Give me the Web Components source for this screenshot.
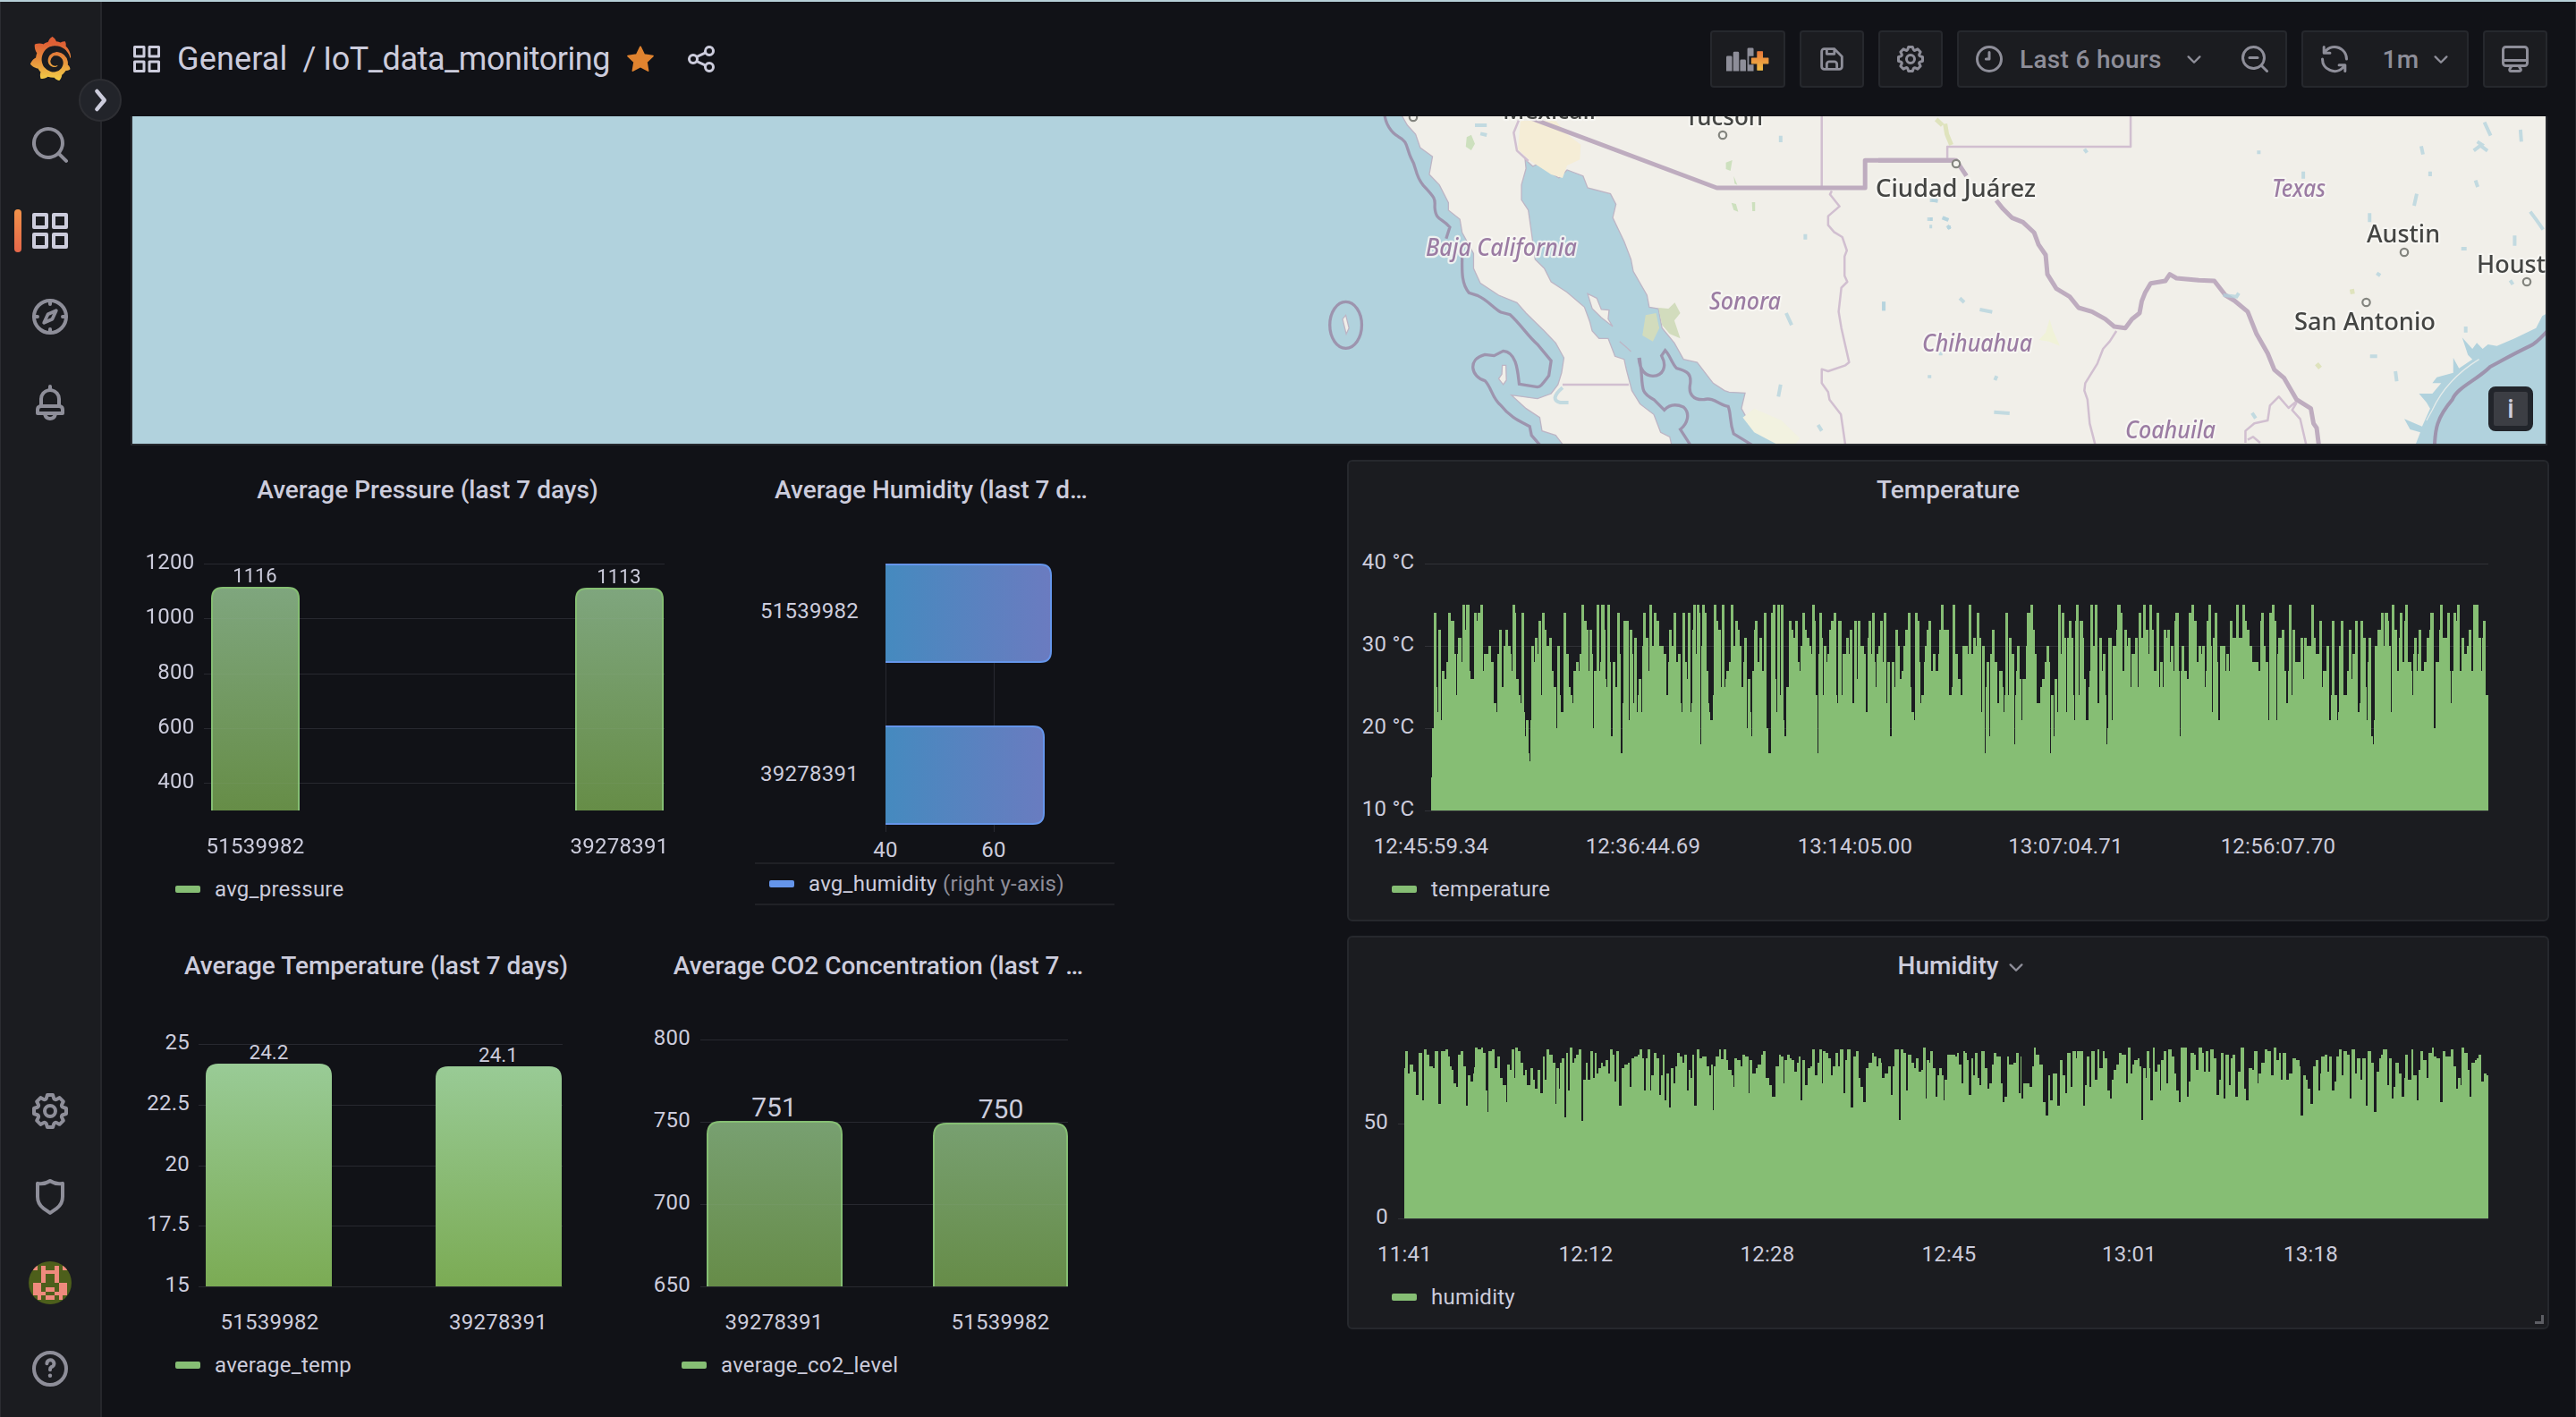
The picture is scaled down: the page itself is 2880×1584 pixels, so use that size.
<!DOCTYPE html>
<html lang="en">
<head>
<meta charset="utf-8">
<title>IoT_data_monitoring</title>
<style>
html,body{margin:0;padding:0;background:#111217}
body{width:2880px;height:1584px;overflow:hidden;font-family:Roboto,"Liberation Sans",sans-serif;color:#ccccdc}
</style>
</head>
<body>
<dash-app></dash-app>
<script>
const ICONS={
apps:'<path d="M10,13H3a1,1,0,0,0-1,1v7a1,1,0,0,0,1,1h7a1,1,0,0,0,1-1V14A1,1,0,0,0,10,13ZM9,20H4V15H9ZM21,2H14a1,1,0,0,0-1,1v7a1,1,0,0,0,1,1h7a1,1,0,0,0,1-1V3A1,1,0,0,0,21,2ZM20,9H15V4h5Zm1,4H14a1,1,0,0,0-1,1v7a1,1,0,0,0,1,1h7a1,1,0,0,0,1-1V14A1,1,0,0,0,21,13Zm-1,7H15V15h5ZM10,2H3A1,1,0,0,0,2,3v7a1,1,0,0,0,1,1h7a1,1,0,0,0,1-1V3A1,1,0,0,0,10,2ZM9,9H4V4H9Z"/>',
search:'<path d="M21.71,20.29,18,16.61A9,9,0,1,0,16.61,18l3.68,3.68a1,1,0,0,0,1.42,0A1,1,0,0,0,21.71,20.29ZM11,18a7,7,0,1,1,7-7A7,7,0,0,1,11,18Z"/>',
searchminus:'<path d="M21.71,20.29,18,16.61A9,9,0,1,0,16.61,18l3.68,3.68a1,1,0,0,0,1.42,0A1,1,0,0,0,21.71,20.29ZM11,18a7,7,0,1,1,7-7A7,7,0,0,1,11,18Z"/><rect x="7" y="10" width="8" height="2" rx="1"/>',
compass:'<g fill="none" stroke="currentColor" stroke-width="2" stroke-linecap="round" stroke-linejoin="round"><circle cx="12" cy="12" r="9"/><path d="M12 3v2M12 19v2M3 12h2M19 12h2"/><path d="M15.4 8.6l-4.6 2-2.2 4.8 4.6-2z" stroke-width="1.9"/></g>',
bell:'<path d="M18,13.18V10a6,6,0,0,0-5-5.91V3a1,1,0,0,0-2,0V4.09A6,6,0,0,0,6,10v3.18A3,3,0,0,0,4,16v2a1,1,0,0,0,1,1H8.14a4,4,0,0,0,7.72,0H19a1,1,0,0,0,1-1V16A3,3,0,0,0,18,13.18ZM8,10a4,4,0,0,1,8,0v3H8Zm4,10a2,2,0,0,1-1.72-1h3.44A2,2,0,0,1,12,20Zm6-3H6V16a1,1,0,0,1,1-1H17a1,1,0,0,1,1,1Z"/>',
cog:'<path d="M21.32,9.55l-1.89-.63.89-1.78A1,1,0,0,0,20.13,6L18,3.87a1,1,0,0,0-1.15-.19l-1.78.89-.63-1.89A1,1,0,0,0,13.5,2h-3a1,1,0,0,0-.95.68L8.92,4.57,7.14,3.68A1,1,0,0,0,6,3.87L3.87,6a1,1,0,0,0-.19,1.15l.89,1.78-1.89.63A1,1,0,0,0,2,10.5v3a1,1,0,0,0,.68.95l1.89.63-.89,1.78A1,1,0,0,0,3.87,18L6,20.13a1,1,0,0,0,1.15.19l1.78-.89.63,1.89a1,1,0,0,0,.95.68h3a1,1,0,0,0,.95-.68l.63-1.89,1.78.89A1,1,0,0,0,18,20.13L20.13,18a1,1,0,0,0,.19-1.15l-.89-1.78,1.89-.63A1,1,0,0,0,22,13.5v-3A1,1,0,0,0,21.32,9.55ZM20,12.78l-1.2.4A2,2,0,0,0,17.64,16l.57,1.14-1.1,1.1L16,17.64a2,2,0,0,0-2.79,1.16l-.4,1.2H11.22l-.4-1.2A2,2,0,0,0,8,17.64l-1.14.57-1.1-1.1L6.36,16A2,2,0,0,0,5.2,13.18L4,12.78V11.22l1.2-.4A2,2,0,0,0,6.36,8L5.79,6.89l1.1-1.1L8,6.36A2,2,0,0,0,10.82,5.2l.4-1.2h1.56l.4,1.2A2,2,0,0,0,16,6.36l1.14-.57,1.1,1.1L17.64,8a2,2,0,0,0,1.16,2.79l1.2.4ZM12,8a4,4,0,1,0,4,4A4,4,0,0,0,12,8Zm0,6a2,2,0,1,1,2-2A2,2,0,0,1,12,14Z"/>',
shield:'<path d="M19.63,3.65a1,1,0,0,0-.84-.2,8,8,0,0,1-6.22-1.27,1,1,0,0,0-1.14,0A8,8,0,0,1,5.21,3.45a1,1,0,0,0-.84.2A1,1,0,0,0,4,4.43v7.45a9,9,0,0,0,3.77,7.33l3.65,2.6a1,1,0,0,0,1.16,0l3.65-2.6A9,9,0,0,0,20,11.88V4.43A1,1,0,0,0,19.63,3.65ZM18,11.88a7,7,0,0,1-2.93,5.7L12,19.77,8.93,17.58A7,7,0,0,1,6,11.88V5.58a10,10,0,0,0,6-1.39,10,10,0,0,0,6,1.39Z"/>',
help:'<circle cx="12" cy="12" r="9" fill="none" stroke="currentColor" stroke-width="2"/><path d="M10.2 9.1A2 2 0 1 1 12.6 11.1Q12 11.4 12 12.6" fill="none" stroke="currentColor" stroke-width="2" stroke-linecap="round"/><circle cx="12" cy="15.9" r="1.1"/>',
clock:'<g fill="none" stroke="currentColor" stroke-width="2" stroke-linecap="round" stroke-linejoin="round"><circle cx="12" cy="12" r="9"/><path d="M12 7v5H9.6"/></g>',
save:'<path d="M20.71,9.29l-6-6a1,1,0,0,0-.32-.21A1.09,1.09,0,0,0,14,3H6A3,3,0,0,0,3,6V18a3,3,0,0,0,3,3H18a3,3,0,0,0,3-3V10A1,1,0,0,0,20.71,9.29ZM9,5h4V7H9Zm6,14H9V16a1,1,0,0,1,1-1h4a1,1,0,0,1,1,1Zm4-1a1,1,0,0,1-1,1H17V16a3,3,0,0,0-3-3H10a3,3,0,0,0-3,3v3H6a1,1,0,0,1-1-1V6A1,1,0,0,1,6,5H7V8A1,1,0,0,0,8,9h6a1,1,0,0,0,1-1V6.41l4,4Z"/>',
sync:'<path d="M19.91,15.51H15.38a1,1,0,0,0,0,2h2.4A8,8,0,0,1,4,12a1,1,0,0,0-2,0,10,10,0,0,0,16.88,7.23V21a1,1,0,0,0,2,0V16.5A1,1,0,0,0,19.91,15.51ZM12,2A10,10,0,0,0,5.12,4.77V3a1,1,0,0,0-2,0V7.5a1,1,0,0,0,1,1h4.5a1,1,0,0,0,0-2H6.22A8,8,0,0,1,20,12a1,1,0,0,0,2,0A10,10,0,0,0,12,2Z"/>',
monitor:'<path d="M19,2H5A3,3,0,0,0,2,5V15a3,3,0,0,0,3,3H7.64l-.58,1a2,2,0,0,0,0,2,2,2,0,0,0,1.75,1h6.46A2,2,0,0,0,17,21a2,2,0,0,0,0-2l-.59-1H19a3,3,0,0,0,3-3V5A3,3,0,0,0,19,2ZM8.77,20,10,18H14l1.2,2ZM20,15a1,1,0,0,1-1,1H5a1,1,0,0,1-1-1V14H20Zm0-3H4V5A1,1,0,0,1,5,4H19a1,1,0,0,1,1,1Z"/>',
share:'<path d="M18,14a4,4,0,0,0-3.08,1.48l-5.1-2.35a3.64,3.64,0,0,0,0-2.26l5.1-2.35A4,4,0,1,0,14,6a4.17,4.17,0,0,0,.07.71L8.79,9.14a4,4,0,1,0,0,5.72l5.28,2.43A4.17,4.17,0,0,0,14,18a4,4,0,1,0,4-4ZM18,4a2,2,0,1,1-2,2A2,2,0,0,1,18,4ZM6,14a2,2,0,1,1,2-2A2,2,0,0,1,6,14Zm12,6a2,2,0,1,1,2-2A2,2,0,0,1,18,20Z"/>',
star:'<path fill="#e0832f" stroke="#e0832f" stroke-width="1.2" stroke-linejoin="round" d="M12 2.9l2.8 5.9 6.5.9-4.7 4.5 1.1 6.5-5.7-3.1-5.7 3.1 1.1-6.5L2.7 9.7l6.5-.9z"/>',
right:'<path d="M10 6.5l4.6 5.5L10 17.5" fill="none" stroke="currentColor" stroke-width="2.4" stroke-linecap="round" stroke-linejoin="round"/>',
down:'<path d="M3.5 8.6L12 17l8.5-8.4" fill="none" stroke="currentColor" stroke-width="3.2" stroke-linecap="round" stroke-linejoin="round"/>',
addpanel:'<defs><linearGradient id="p" x1="0" y1="0" x2="0" y2="1"><stop offset="0" stop-color="#e8793a"/><stop offset="1" stop-color="#f0bb45"/></linearGradient></defs><path d="M0 10.200a1 1 0 0 1 1-1h2.500a1 1 0 0 1 1 1V21H0zM5.300 7a1 1 0 0 1 1-1h2.500a1 1 0 0 1 1 1V21H5.300zM10.600 13a1 1 0 0 1 1-1h2.500a1 1 0 0 1 1 1V21h-4.500zM16.200 4a1 1 0 0 1 1-1h2.800a1 1 0 0 1 1 1V21h-4.800z"/><path d="M22.400 4.400h6.600v5h5v6.600h-5v5h-6.600v-5h-5v-6.600h5z" fill="#1b1c20"/><path d="M24 6h3.800v5h4.400v4h-4.400v5h-3.800v-5h-4.400v-4h4.400z" fill="url(#p)" stroke="url(#p)" stroke-width=".8" stroke-linejoin="round"/>',
logo:'<defs><linearGradient id="g" x1="0" y1="0" x2="0" y2="1"><stop offset=".15" stop-color="#df5f35"/><stop offset=".5" stop-color="#e58a3b"/><stop offset="1" stop-color="#f3cf48"/></linearGradient></defs><path fill="url(#g)" d="M23.02 10.59a8.578 8.578 0 0 0-.862-3.034 8.911 8.911 0 0 0-1.789-2.445c.337-1.342-.413-2.505-.413-2.505-1.292-.08-2.113.4-2.416.62-.052-.02-.102-.044-.154-.064-.22-.089-.446-.172-.677-.247-.231-.073-.47-.14-.711-.197a9.867 9.867 0 0 0-.875-.161C14.557.753 12.94 0 12.94 0c-1.804 1.145-2.147 2.744-2.147 2.744l-.018.093c-.098.029-.2.057-.298.088-.138.042-.275.094-.413.143-.138.055-.275.107-.41.166a8.869 8.869 0 0 0-1.557.87l-.063-.029c-2.497-.955-4.716.195-4.716.195-.203 2.658.996 4.33 1.235 4.636a11.608 11.608 0 0 0-.607 2.635C1.636 12.677.953 15.014.953 15.014c1.926 2.214 4.171 2.351 4.171 2.351.003-.002.006-.002.006-.005.285.509.615.994.986 1.446.156.19.32.371.488.548-.704 2.009.099 3.68.099 3.68 2.144.08 3.553-.937 3.849-1.173a9.784 9.784 0 0 0 3.164.501h.08l.055-.003.107-.002.103-.005.003.002c1.01 1.44 2.788 1.646 2.788 1.646 1.264-1.332 1.337-2.653 1.337-2.94v-.058c0-.02-.003-.039-.003-.06.265-.187.52-.387.758-.6a7.875 7.875 0 0 0 1.415-1.7c1.43.083 2.437-.885 2.437-.885-.236-1.49-1.085-2.216-1.264-2.354l-.018-.013-.016-.013a.217.217 0 0 1-.031-.02c.008-.092.016-.18.02-.27.011-.162.016-.323.016-.48v-.253l-.005-.098-.008-.135a1.891 1.891 0 0 0-.01-.13c-.003-.042-.008-.083-.013-.125l-.016-.124-.018-.122a6.215 6.215 0 0 0-2.032-3.73 6.015 6.015 0 0 0-3.222-1.46 6.292 6.292 0 0 0-.85-.048l-.107.002h-.063l-.044.003-.104.008a4.777 4.777 0 0 0-3.335 1.695c-.332.4-.592.84-.768 1.297a4.594 4.594 0 0 0-.312 1.817l.003.091c.005.055.007.11.013.164a3.615 3.615 0 0 0 .698 1.82 3.53 3.53 0 0 0 1.827 1.282c.33.098.66.14.971.137.039 0 .078 0 .114-.002l.063-.003c.02 0 .041-.003.062-.003.034-.002.065-.007.099-.01.007 0 .018-.003.028-.003l.031-.005.06-.008a1.18 1.18 0 0 0 .112-.02c.036-.008.072-.013.109-.024a2.634 2.634 0 0 0 .914-.415c.028-.02.056-.041.085-.065a.248.248 0 0 0 .039-.35.244.244 0 0 0-.309-.06l-.078.042c-.09.044-.184.083-.283.116a2.476 2.476 0 0 1-.475.096c-.028.003-.054.006-.083.006l-.083.002c-.026 0-.054 0-.08-.002l-.102-.006h-.012l-.024.006c-.016-.003-.031-.003-.044-.006-.031-.002-.06-.007-.091-.01a2.59 2.59 0 0 1-.724-.213 2.557 2.557 0 0 1-.667-.438 2.52 2.52 0 0 1-.805-1.475 2.306 2.306 0 0 1-.029-.444l.006-.122v-.023l.002-.031c.003-.021.003-.04.005-.06a3.163 3.163 0 0 1 1.352-2.29 3.12 3.12 0 0 1 .937-.43 2.946 2.946 0 0 1 .776-.101h.06l.07.002.045.003h.026l.07.005a4.041 4.041 0 0 1 1.635.49 3.94 3.94 0 0 1 1.602 1.662 3.77 3.77 0 0 1 .397 1.414l.005.076.003.075c.002.026.002.05.002.075 0 .024.003.052 0 .07v.065l-.002.073-.008.174a6.195 6.195 0 0 1-.08.639 5.1 5.1 0 0 1-.267.927 5.31 5.31 0 0 1-.624 1.13 5.052 5.052 0 0 1-3.237 2.014 4.82 4.82 0 0 1-.649.066l-.039.003h-.287a6.607 6.607 0 0 1-1.716-.265 6.776 6.776 0 0 1-3.4-2.274 6.75 6.75 0 0 1-.746-1.15 6.616 6.616 0 0 1-.714-2.596l-.005-.083-.002-.02v-.056l-.003-.073v-.096l-.003-.104v-.07l.003-.163c.008-.22.026-.45.054-.678a8.707 8.707 0 0 1 .28-1.355c.128-.444.286-.872.473-1.277a7.04 7.04 0 0 1 1.456-2.1 5.925 5.925 0 0 1 .953-.763c.169-.111.343-.213.524-.306.089-.05.182-.091.273-.135.047-.02.093-.042.138-.062a7.177 7.177 0 0 1 .714-.267l.145-.045c.049-.015.098-.026.148-.041.098-.029.197-.052.296-.076.049-.013.1-.02.15-.033l.15-.032.151-.028.076-.013.075-.01.153-.024c.057-.01.114-.013.171-.023l.169-.021c.036-.003.073-.008.106-.01l.073-.008.036-.003.042-.002c.057-.003.114-.008.171-.01l.086-.006h.023l.037-.003.145-.007a7.999 7.999 0 0 1 1.708.125 7.917 7.917 0 0 1 2.048.68 8.253 8.253 0 0 1 1.672 1.09l.09.077.089.078c.06.052.114.107.171.159.057.052.112.106.166.16.052.055.107.107.159.164a8.671 8.671 0 0 1 1.41 1.978c.012.026.028.052.04.078l.04.078.075.156c.023.051.05.1.07.153l.065.15a8.848 8.848 0 0 1 .45 1.34.19.19 0 0 0 .201.142.186.186 0 0 0 .172-.184c.01-.246.002-.532-.024-.856z"/>'
};

class UiIcon extends HTMLElement{
  connectedCallback(){
    const s=+this.getAttribute('size')||48, n=this.getAttribute('name');
    const wide=n==='addpanel';
    const vb=wide?'0 0 33 24':'0 0 24 24', w=wide?48:s, h=wide?35:s;
    this.attachShadow({mode:'open'}).innerHTML=`<style>:host{display:block;flex:none;width:${w}px;height:${h}px}svg{display:block}</style><svg width="${w}" height="${h}" viewBox="${vb}" fill="currentColor">${ICONS[n]}</svg>`;
  }
}
customElements.define('ui-icon',UiIcon);

class NavItem extends HTMLElement{
  connectedCallback(){
    this.attachShadow({mode:'open'}).innerHTML=`<style>
    :host{display:flex;align-items:center;height:96px;color:#8e8e99}
    i{display:block;width:8px;height:48px;margin:0 8px 0 15px;border-radius:4px}
    :host([active]){color:#ccccdc}
    :host([active]) i{background:linear-gradient(#f2924a,#e5674a)}
    </style><i></i><slot></slot>`;
  }
}
customElements.define('nav-item',NavItem);

class UserAvatar extends HTMLElement{
  connectedCallback(){
    const c=[[3,1,1,4],[6,1,1,4],[4,2,2,1],[1,1,1,1],[8,1,1,1],[1,5,2,3],[7,5,2,3],[4,6,2,1],[3,7,1,1],[6,7,1,1],[2,8,1,1],[4,8,2,1],[7,8,1,1]];
    this.attachShadow({mode:'open'}).innerHTML=`<style>:host{display:block;width:48px;height:48px;border-radius:50%;overflow:hidden;background:#4d5f1b}svg{display:block}</style>
    <svg width="48" height="48" viewBox="0 0 10 10" shape-rendering="crispEdges" fill="#ef8a7d">${c.map(([x,y,w,h])=>`<rect x="${x}" y="${y}" width="${w}" height="${h}"/>`).join('')}</svg>`;
  }
}
customElements.define('user-avatar',UserAvatar);

class SideNav extends HTMLElement{
  connectedCallback(){
    this.attachShadow({mode:'open'}).innerHTML=`<style>
    :host{display:flex;flex-direction:column;box-sizing:border-box;width:114px;height:1582px;background:#1b1c20;border-left:1px solid #2c2d32;border-right:2px solid #26272c;position:relative}
    .logo{height:112px;padding:39px 0 0 31px;box-sizing:border-box}
    .fill{flex:1}
    .foot{padding-bottom:6px}
    .toggle{position:absolute;left:87px;top:86px;width:44px;height:44px;border:2px solid #2d2e33;border-radius:50%;background:#22242a;color:#ccccdc;display:flex;align-items:center;justify-content:center}
    </style>
    <div class="logo"><ui-icon name="logo" size="49"></ui-icon></div>
    <nav><nav-item><ui-icon name="search"></ui-icon></nav-item><nav-item active><ui-icon name="apps"></ui-icon></nav-item><nav-item><ui-icon name="compass"></ui-icon></nav-item><nav-item><ui-icon name="bell"></ui-icon></nav-item></nav>
    <div class="fill"></div>
    <div class="foot"><nav-item><ui-icon name="cog"></ui-icon></nav-item><nav-item><ui-icon name="shield"></ui-icon></nav-item><nav-item><user-avatar></user-avatar></nav-item><nav-item><ui-icon name="help"></ui-icon></nav-item></div>
    <div class="toggle"><ui-icon name="right" size="44"></ui-icon></div>`;
  }
}
customElements.define('side-nav',SideNav);

class ToolGroup extends HTMLElement{
  connectedCallback(){
    this.attachShadow({mode:'open'}).innerHTML=`<style>
    :host{display:flex;box-sizing:border-box;height:64px;border:2px solid #26282d;border-radius:4px;background:#1b1c20;color:#8e8e99;font-size:28px;font-weight:500;letter-spacing:.3px}
    ::slotted(*){display:flex;align-items:center;justify-content:center;box-sizing:border-box}
    ::slotted(*+*){border-left:2px solid #26282d}
    </style><slot></slot>`;
  }
}
customElements.define('tool-group',ToolGroup);

class DashHeader extends HTMLElement{
  connectedCallback(){
    this.attachShadow({mode:'open'}).innerHTML=`<style>
    :host{display:flex;align-items:center;height:128px;box-sizing:border-box;padding:0 31px 0 32px}
    .t{font-size:36px;white-space:nowrap}
    .g{margin-left:16px;letter-spacing:.15px}.s{margin-left:17px}.n{margin-left:8px;letter-spacing:-.45px}
    .star{margin:0 32px 0 16px}
    .tools{display:flex;gap:16px;margin-left:auto}
    .time{justify-content:flex-start;width:296px;padding-left:16px}
    .time b,.iv b{font-weight:500}
    .time b{margin:0 27px 0 16px}.iv b{margin-right:16px}
    </style>
    <ui-icon name="apps" size="36"></ui-icon><span class="t g">General</span><span class="t s">/</span><span class="t n">IoT_data_monitoring</span>
    <ui-icon class="star" name="star" size="36"></ui-icon><ui-icon name="share" size="36"></ui-icon>
    <div class="tools">
      <tool-group><span style="width:80px"><ui-icon name="addpanel"></ui-icon></span></tool-group>
      <tool-group><span style="width:68px"><ui-icon name="save" size="34"></ui-icon></span></tool-group>
      <tool-group><span style="width:68px"><ui-icon name="cog" size="36"></ui-icon></span></tool-group>
      <tool-group><span class="time"><ui-icon name="clock" size="36"></ui-icon><b>Last 6 hours</b><ui-icon name="down" size="18"></ui-icon></span><span style="width:69px"><ui-icon name="searchminus" size="36"></ui-icon></span></tool-group>
      <tool-group><span style="width:69px"><ui-icon name="sync" size="36"></ui-icon></span><span class="iv" style="width:114px"><b>1m</b><ui-icon name="down" size="18"></ui-icon></span></tool-group>
      <tool-group><span style="width:68px"><ui-icon name="monitor" size="36"></ui-icon></span></tool-group>
    </div>`;
  }
}
customElements.define('dash-header',DashHeader);

/* Map: two tile sheets (west, east), each with its own coordinate system */
class GeoMap extends HTMLElement{
  connectedCallback(){
    const west='transform="translate(1400 100) scale(.5102 .33333)"', east='transform="translate(2100 100) scale(.4975 .33333)"';
    const place=(x,y,t,w,c='')=>`<text class="${c}" x="${x}" y="${y}" textLength="${w}" lengthAdjust="spacingAndGlyphs">${t}</text>`;
    const town=(x,y)=>`<circle cx="${x}" cy="${y}" r="4.200" fill="#f4f3ee" stroke="#84857f" stroke-width="2.200"/>`;
    this.attachShadow({mode:'open'}).innerHTML=`<style>
    :host{display:block;box-sizing:border-box;width:2702px;height:368px;border:solid #26282d;border-width:0 2px 2px;position:relative}
    svg{display:block}
    .tiles{filter:blur(.7px)}
    path,ellipse{vector-effect:non-scaling-stroke}
    text{font-family:"Noto Sans","Open Sans",sans-serif;font-size:27.500px;font-weight:500;fill:#444543;paint-order:stroke;stroke:#f8f7f3;stroke-width:4.500px;stroke-opacity:.85;stroke-linejoin:round}
    .r{font-style:italic;fill:#9b7ca3;font-size:26.500px;font-weight:500}
    .sea{fill:none;stroke:#9d94ae;stroke-width:3.300}
    .b{fill:none;stroke:#beacbf;stroke-width:5;stroke-linejoin:round}
    .st{fill:none;stroke:#d1bfd0;stroke-width:2.500;stroke-linejoin:round}
    .lake{fill:none;stroke:#b3d3de;stroke-width:4;opacity:.75}
    .info{position:absolute;right:14px;bottom:14px;width:38px;height:38px;border:6px solid #22252b;border-radius:8px;background:#3c3e44;color:#ccccdc;font-size:29px;font-weight:500;line-height:38px;text-align:center}
    </style>
    <svg width="2698" height="366" viewBox="148 130 2698 366">
      <rect x="148" y="130" width="2698" height="366" fill="#b1d2dd"/>
      <g class="tiles">
      <g ${west}>
        <path fill="#f1efe9" stroke="#bdb5c5" stroke-width="1.300" d="M325 80L340 120 358 150 368 195 395 225 388 285 410 320 430 380 430 405 455 435 460 480 485 550 485 600 500 650 540 690 580 715 600 750 640 810 665 850 683 900 678 950 670 990 655 1020 625 1037 568 1025 600 1070 630 1100 635 1145 665 1160 685 1200 920 1200 915 1165 895 1150 880 1090 850 1055 832 1010 820 940 815 905 795 895 780 835 760 835 745 810 740 780 728 730 690 680 655 645 640 600 620 570 612 480 605 405 590 370 590 320 600 265 598 235 615 258 625 250 672 297 690 270 725 290 735 330 785 350 797 385 790 430 815 510 830 570 835 610 865 690 870 730 890 735 898 800 925 850 945 905 975 915 1010 985 1035 1010 1045 1015 1080 1018 1072 1070 1090 1120 1120 1150 1150 1170 1155 1200 3000 1200 3000 80Z"/>
        <path fill="#f5edd6" d="M588 105L665 105 690 150 720 185 718 235 690 255 680 297 655 285 610 240 582 200Z"/>
        <path fill="#d2dcbd" d="M862 757L885 750 892 800 878 845 855 825ZM890 732L912 735 926 715 938 750 925 775 938 835 915 820 898 790Z"/>
        <path fill="#cde0be" d="M470 160l10-8 8 30-8 22-12-12zM1038 245l14 -8-4 36-10-6zM1050 380l10 4 5 26-10-6zM1095 378h7v30h-6zM1055 290l8 30-6-4z"/>
        <path fill="#f2f2e0" d="M1100 1070l60 40 40 60-10 20h-40l-50-40-25-50z"/>
        <path fill="#f1efe9" stroke="#bdb5c5" stroke-width="1.300" d="M735 685L755 700 765 738 782 740 780 770 790 795 765 765 745 735ZM198 770L205 757 212 800 206 820ZM548 925L556 925 557 975 550 990 540 970 547 955ZM805 845l15 20 10 14"/>
        <path class="sea" d="M290 80C291 115 305 145 320 158 342 175 337 195 348 230 362 265 355 285 375 322 405 370 400 370 400 395 402 440 415 430 433 462L425 500M460 560C460 600 457 650 475 682L495 692C515 705 530 735 545 747L565 755C590 790 600 820 625 855L655 910 650 960C635 990 632 997 625 998L585 988C582 950 580 880 550 877L530 893 510 889C470 905 480 965 510 977 525 1000 525 1035 545 1060 565 1100 590 1115 608 1130L612 1160 632 1195M847 900C850 950 865 960 878 961 900 960 910 930 897 893L905 875C915 890 920 920 930 935 955 945 962 955 960 985 955 1020 965 1042 990 1040 1010 1030 1025 1060 1043 1063 1050 1090 1045 1110 1055 1155L1095 1192M849 900L853 955C855 1010 855 1020 880 1040L903 1075C915 1055 930 1055 945 1065 960 1085 955 1120 938 1140L960 1192"/>
        <ellipse class="sea" cx="205" cy="790" rx="35" ry="78"/>
        <path class="st" d="M1248 80V325M680 990H825M585 100L573 145 580 205 605 240M1270 340L1266 352 1287 392 1262 425 1262 455 1275 478 1293 495 1303 540 1298 560 1298 625 1304 645 1291 665 1285 745 1291 800 1308 915 1300 925 1262 945 1248 938 1248 985 1262 1015 1265 1040 1290 1090 1300 1195"/>
        <path class="b" d="M610 96L1018 330H1343V238H1540"/>
        <path class="lake" d="M488 120h26M500 148l14 5M680 1000q-30 40 -5 50l18 0M1170 750l12 40M1384 712v30M1158 990l-5 40M1212 485v18M1158 155v22M1240 1125l8 20M1485 435h6M1512 430l14 8M1484 460h6M1527 456v12M1485 372h16"/>
      </g>
      <g ${east}>
        <path fill="#b1d2dd" d="M1510 745L1492 760 1478 800 1430 835 1390 860 1370 855 1358 870 1345 850 1335 870 1312 832 1325 890 1335 905 1305 935 1292 900 1292 950 1255 965 1245 985 1265 985 1245 1020 1215 1020 1232 1050 1240 1070 1222 1130 1182 1105 1195 1140 1218 1150 1205 1200H1510Z"/>
        <path fill="none" stroke="#e4ebea" stroke-width="1.300" d="M1350 905C1290 960 1262 1020 1245 1075L1232 1110"/>
        <path class="sea" style="stroke-width:4" d="M1510 800C1490 830 1480 850 1465 860 1430 885 1400 910 1375 930 1345 975 1300 1000 1290 1040 1250 1110 1252 1150 1250 1195"/>
        <path class="st" d="M155 235V192H567V80M535 810L520 845 505 870 492 920 465 985 463 1010 470 1040 475 1120 488 1195M940 1045L922 1068 900 1030 880 1060 875 1110 845 1120 825 1145 825 1185M940 1050L930 1075 948 1105 962 1195M830 1175l12-10 16 20"/>
        <path class="b" d="M0 238H175L198 290M265 372L280 400 300 430 325 445 350 480 360 520 376 555 380 620 400 668 430 695 450 732 480 745 510 770 530 795 555 800 570 770 587 750 592 710 600 680 612 650 645 642 655 620 670 633 720 640 755 642 780 690 800 708 830 745 850 820 875 885 890 940 912 968 940 1040 972 1070 978 1120 985 1135 990 1195"/>
        <path fill="none" stroke="#dfe3bd" stroke-width="5" d="M130 100l14 20M150 115l4 35 10 36M1064 670l2 16M985 920l8 14"/>
        <path fill="#f0f2d8" d="M385 770l8 40 15 50-25-15-22-5 15-25z"/>
        <path class="lake" d="M1362 110l14 45M1443 135l2 40M1338 205l18-20-10-10M1355 190l14 16M1220 190l4 28M955 275v24M1104 415v30M1240 275v16M1342 305l5 22M1210 350l-6 40M1465 410l15 30 14 30M1430 490v34M1105 895h16M1162 945l3 34M775 690l30 5 5-12M228 738l28 8M12 712v30M260 1082l35 4M840 1085l8 18M110 435l12 0M145 430l12 8M155 456l6 12M120 370l14 5M183 700l10 14M115 958v10M1310 534h12M1420 640l6 14M1320 795v20M1120 616l8 8M140 880v12M262 975l4-14M463 200l6 12M855 205v12"/>
      </g>
      ${place(1680,132.5,'Mexicali',104)}${place(1884,140,'Tucson',87)}${place(2097,219.5,'Ciudad Juárez',179)}${place(2646,271,'Austin',82)}${place(2769,305,'Houst',77)}${place(2565,369,'San Antonio',158)}
      ${place(1594,286,'Baja California',169,'r')}${place(1911,346,'Sonora',80,'r')}${place(2149,393,'Chihuahua',123,'r')}${place(2540,220,'Texas',60,'r')}${place(2376,489.5,'Coahuila',101,'r')}
      ${town(1580,131)}${town(1926,151)}${town(2187,183)}${town(2688,282)}${town(2825,315)}${town(2645.500,338)}
      </g>
    </svg><div class="info">i</div>`;
  }
}
customElements.define('geo-map',GeoMap);

class DashPanel extends HTMLElement{
  connectedCallback(){
    const menu=this.hasAttribute('menu');
    this.attachShadow({mode:'open'}).innerHTML=`<style>
    :host{display:flex;flex-direction:column;box-sizing:border-box;border:2px solid transparent;border-radius:6px;position:relative;overflow:hidden}
    :host([framed]){background:#1b1c20;border-color:#26282d}
    header{display:flex;align-items:center;justify-content:center;height:63px;flex:none;font-size:28px;font-weight:500;white-space:nowrap;line-height:32px}
    header ui-icon{margin:2px -29px 0 11px;color:#8e8e99}
    .grip{position:absolute;right:4px;bottom:4px;width:7px;height:7px;border:solid #5d5e64;border-width:0 3px 3px 0}
    </style><header>${this.getAttribute('heading')}${menu?'<ui-icon name="down" size="18"></ui-icon>':''}</header><slot></slot>${menu?'<div class="grip"></div>':''}`;
  }
}
customElements.define('dash-panel',DashPanel);

class ChartLegend extends HTMLElement{
  connectedCallback(){
    this.attachShadow({mode:'open'}).innerHTML=`<style>
    :host{display:flex;align-items:center;height:40px;font-size:24px;letter-spacing:.26px;box-sizing:border-box;white-space:pre}
    i{width:28px;height:8px;border-radius:2px;background:var(--series,#86be74);margin-right:16px}
    ::slotted(span){color:#8e8e99}
    </style><i></i><div><slot></slot></div>`;
  }
}
customElements.define('chart-legend',ChartLegend);

const label=(x,y,t,a='middle',s=24)=>`<text x="${x}" y="${y}" text-anchor="${a}" font-size="${s}" letter-spacing="${s===24?.26:0}">${t}</text>`;
const hline=(x1,x2,y)=>`<rect x="${x1}" y="${y}" width="${x2-x1}" height="1" fill="#ccccdc" opacity=".13"/>`;
const chartStyle='<style>:host{display:block;flex:none}svg{display:block;font-family:Roboto,"Liberation Sans",sans-serif;fill:#ccccdc}</style>';

const BARS={
pressure:{box:[148,579,660,395],grid:[228,743,[630,691,753,814,875]],axis:[217.5,[[636,1200],[697,1000],[759,800],[820,600],[881,400]]],
  bars:[[236,656,99],[643,657,99]],base:906,r:12,grad:[656,906,'#7fa67e','#668d47'],stroke:1,vals:[[285,650.500,1116],[692,652,1113]],vs:22,xl:[[285.500,'51539982'],[692.500,'39278391']],xy:953.5},
temp:{box:[148,1111,545,395],grid:[222,629,[1167,1235,1303,1370,1438]],axis:[212,[[1173,25],[1241,22.5],[1309,20],[1376,17.5],[1443.500,15]]],
  bars:[[230,1189,141],[487,1192,141]],base:1438,r:14,grad:[1189,1438,'#99cb96','#7bab54'],vals:[[300.500,1184,24.2],[557,1187,24.1]],vs:22.500,xl:[[301.500,'51539982'],[557,'39278391']],xy:1486},
co2:{box:[713,1111,538,395],grid:[783,1194,[1162,1254,1346,1438]],axis:[772,[[1168,800],[1260,750],[1352,700],[1444,650]]],
  bars:[[790,1253,152],[1043,1255,151]],base:1438,r:14,grad:[1253,1438,'#78a071','#668c48'],stroke:1,vals:[[865.500,1248,751],[1119,1250,750]],vs:30,xl:[[865.500,'39278391'],[1118.500,'51539982']],xy:1486}
};
class BarChart extends HTMLElement{
  connectedCallback(){
    const c=BARS[this.getAttribute('data')], [x,y,w,h]=c.box, g=c.grad, i=c.stroke?1:0;
    const bar=([bx,by,bw])=>{const l=bx+i,t=by+i,r=bx+bw-i,k=c.r;const d=`M${l} ${c.base}V${t+k}Q${l} ${t} ${l+k} ${t}H${r-k}Q${r} ${t} ${r} ${t+k}V${c.base}`;
      return `<path d="${d}" fill="url(#f)" ${c.stroke?'stroke="#85be73" stroke-width="2"':''}/>`;};
    this.attachShadow({mode:'open'}).innerHTML=`${chartStyle}<svg width="${w}" height="${h}" viewBox="${c.box.join(' ')}">
    <defs><linearGradient id="f" gradientUnits="userSpaceOnUse" x1="0" x2="0" y1="${g[0]}" y2="${g[1]}"><stop offset="0" stop-color="${g[2]}"/><stop offset="1" stop-color="${g[3]}"/></linearGradient></defs>
    ${c.grid[2].map(v=>hline(c.grid[0],c.grid[1],v)).join('')}${c.bars.map(bar).join('')}
    ${c.stroke?`<g opacity=".4">${c.bars.map(b=>c.grid[2].filter(v=>v>b[1]+10&&v<c.base).map(v=>hline(b[0],b[0]+b[2],v)).join('')).join('')}</g>`:''}
    ${c.axis[1].map(([v,t])=>label(c.axis[0],v,t,'end')).join('')}${c.vals.map(([a,b,t])=>label(a,b,t,'middle',c.vs)).join('')}${c.xl.map(([a,t])=>label(a,c.xy,t)).join('')}</svg>`;
  }
}
customElements.define('bar-chart',BarChart);

class HbarChart extends HTMLElement{
  connectedCallback(){
    const bar=(y,r)=>`<path d="M990 ${y+1}H${r-13}Q${r-1} ${y+1} ${r-1} ${y+13}V${y+98}Q${r-1} ${y+110} ${r-13} ${y+110}H990" fill="url(#f)" stroke="#6595ea" stroke-width="2"/>`;
    const v=x=>`<rect x="${x}" y="630" width="1" height="300" fill="#ccccdc" opacity=".13"/>`;
    this.attachShadow({mode:'open'}).innerHTML=`${chartStyle}<svg width="426" height="385" viewBox="828 579 426 385">
    <defs><linearGradient id="f" gradientUnits="userSpaceOnUse" x1="990" x2="1176" y1="0" y2="0"><stop offset="0" stop-color="#458abf"/><stop offset="1" stop-color="#6b7bc0"/></linearGradient></defs>
    ${v(990)}${v(1111)}${bar(630,1176)}${bar(811,1168)}
    ${label(960,691,'51539982','end')}${label(960,873,'39278391','end')}${label(990,958,40)}${label(1111,958,60)}</svg>`;
  }
}
customElements.define('hbar-chart',HbarChart);

/* Series are run-length steps: "offset:value" pairs, each valid until the next offset */
const TEMP_A='246:14 249:20 253:34 260:25 262:22 264:32 271:21 273:27 280:26 284:28 289:34 296:33 305:29 309:24 311:29 314:31 323:28 325:35 332:32 334:35 343:27 345:26 354:34 361:33 363:34 370:35 376:27 379:29 390:30 396:28 403:23 410:22 412:29 417:32 423:25 428:30 432:32 439:30 446:29 448:27 450:35 457:34 459:26 466:24 470:23 473:34 479:22 482:19 484:21 491:17 493:16 495:21 497:30 504:28 506:31 513:29 515:33 522:24 524:34 531:32 535:30 542:31 549:27 553:25 560:20 562:30 569:24 571:22 578:34 585:29 591:25 596:24 600:23 603:27 609:28 616:27 618:29 623:35 629:33 636:32 641:27 643:32 650:29 652:20 654:27 661:35 668:27 670:28 672:35 681:32 683:26 685:25 688:35 694:28 697:19 701:28 708:25 712:34 719:29 721:17 726:23 728:33 741:21 744:32 750:29 753:23 755:31 762:22 764:24 766:26 773:22 775:30 777:34 784:31 791:27 793:35 800:30 804:34 811:33 818:30 829:29 836:24 840:28 842:32 849:30 853:34 860:28 865:29 871:23 874:22 876:34 883:28 886:26 889:34 896:22 898:23 900:32 903:35 909:29 912:35 918:34 921:18 923:30 925:35 932:34 936:27 941:23 943:22 945:21 952:24 954:35 961:33 965:32 972:25 974:35 981:25 983:26 986:27 992:28 997:35 1004:30 1008:33 1015:32 1019:30 1024:25 1028:28 1030:31 1037:20 1039:26 1046:22 1048:19 1051:27 1055:32 1057:33 1064:28 1068:31 1075:27 1080:34 1086:20 1091:17 1098:34 1102:35 1109:26 1111:22 1113:35 1120:24 1122:35 1129:21 1131:19 1136:25 1142:33 1149:32 1154:31 1158:33 1165:28 1169:27 1172:30 1176:34 1183:32 1187:31 1194:30 1198:29 1200:35 1207:33 1210:24 1214:17 1216:29 1218:34 1225:31 1228:24 1230:30 1236:28 1239:29 1243:32 1248:33 1254:34 1261:24 1263:23 1266:33 1275:24 1277:29 1286:31 1292:29 1295:32 1301:23 1306:33 1313:26 1315:33 1322:30 1331:29 1335:22 1340:31 1342:33 1348:29 1350:34 1357:28 1360:25 1362:29 1366:30 1371:33 1378:28 1380:34 1387:23 1389:28 1396:19 1400:28 1407:25 1409:32 1416:30 1420:26 1425:27 1429:30 1434:32 1440:34 1447:25 1449:22 1456:21 1458:34 1465:33 1469:28 1472:23 1474:24 1481:28 1483:30 1487:32 1492:33 1499:27 1503:29 1510:27 1516:29 1519:32 1523:35 1530:32 1543:24';
const TEMP_B='4:25 7:35 13:29 20:26 27:24 31:30 45:29 47:35 54:29 58:31 65:30 67:34 74:31 78:22 81:30 87:17 90:25 92:28 99:19 101:29 105:32 112:28 119:23 123:27 132:25 134:22 137:24 139:34 146:24 148:31 155:29 161:18 164:24 166:27 168:30 175:26 179:21 181:26 190:30 193:34 202:35 208:32 213:29 217:23 226:25 231:26 237:28 242:30 249:28 251:17 253:24 260:19 262:26 269:22 271:35 278:29 280:34 287:31 291:22 293:31 298:33 305:31 309:24 311:21 314:33 316:35 323:24 325:33 333:31 337:26 340:21 347:25 349:27 352:35 358:30 363:35 370:23 374:31 381:27 383:29 390:24 392:18 394:20 396:31 405:21 408:30 417:32 419:35 428:34 432:27 437:32 444:30 446:31 452:25 455:29 464:31 470:25 473:34 479:31 484:35 491:32 497:29 500:35 506:32 511:27 517:34 524:25 526:28 533:25 535:32 542:31 544:32 551:28 553:30 560:27 562:33 564:34 573:27 576:19 578:27 580:30 587:27 594:26 598:34 605:35 612:33 618:28 623:30 630:29 632:30 638:25 641:27 643:33 647:35 654:30 656:22 659:31 663:34 670:28 672:21 676:30 690:27 692:29 699:27 701:33 708:31 717:35 724:31 732:35 739:33 744:32 751:30 757:28 773:27 777:33 780:34 786:30 791:28 797:21 800:34 806:35 813:33 818:21 820:29 822:31 831:32 838:27 842:23 847:27 849:35 856:24 858:32 865:28 878:31 885:26 887:31 894:30 905:35 912:31 916:29 925:33 932:25 934:27 943:30 950:21 954:24 956:33 963:24 970:21 972:22 974:30 979:33 986:24 995:27 999:32 1006:26 1008:29 1015:33 1021:22 1026:23 1028:33 1035:31 1042:25 1044:21 1046:28 1048:31 1055:19 1060:18 1062:21 1064:30 1071:32 1080:34 1087:30 1089:34 1098:33 1100:30 1104:22 1107:35 1113:32 1120:27 1124:31 1127:34 1133:28 1138:33 1140:35 1147:28 1156:27 1158:24 1160:29 1162:31 1169:27 1172:29 1174:32 1180:27 1187:28 1194:31 1201:32 1203:34 1212:20 1216:28 1225:32 1228:35 1234:31 1245:34 1252:27 1254:23 1256:27 1261:34 1268:33 1270:35 1277:27 1281:31 1288:29 1295:30 1299:32 1306:27 1310:35 1324:31 1331:27 1333:31 1335:33 1342:24 1348:24';
const HUM='90:465 91:410 95:480 97:453 102:475 105:548 108:417 113:567 115:405 118:422 122:458 126:465 129:410 133:577 136:410 142:405 146:428 148:458 150:470 152:512 156:523 158:422 161:410 165:458 168:583 170:487 174:507 177:480 178:460 179:400 183:405 187:400 190:416 193:535 195:602 196:410 201:405 204:463 208:428 211:495 214:518 219:573 220:453 223:470 226:405 229:495 230:400 234:410 237:447 240:487 242:470 245:518 249:463 253:500 255:529 258:470 262:542 265:428 267:500 270:405 273:422 277:480 278:447 281:577 282:463 285:529 287:447 289:433 292:620 294:416 297:535 299:400 302:447 305:433 307:422 310:405 314:632 316:500 319:447 322:500 325:410 328:495 330:416 333:480 335:463 338:447 341:458 344:440 347:480 350:405 353:422 355:507 358:410 361:583 364:463 368:453 372:447 375:523 377:433 380:428 385:422 387:405 390:433 393:535 395:433 397:405 400:535 402:487 405:416 408:433 412:548 414:487 416:422 419:567 421:480 424:590 426:463 430:512 432:458 434:416 438:428 441:447 443:422 447:535 449:470 451:495 453:422 456:583 459:405 463:433 466:428 472:458 475:487 477:453 479:597 481:458 483:428 487:405 490:437 493:405 496:440 499:470 503:487 505:523 507:433 510:440 514:458 517:422 520:428 525:542 526:440 529:480 533:463 536:453 540:422 543:410 546:495 550:518 554:555 558:458 563:422 565:428 568:512 570:440 573:422 576:433 579:440 582:475 585:447 588:428 590:567 592:440 596:518 599:463 602:458 605:405 608:487 611:447 614:405 617:512 618:410 622:416 625:433 628:487 631:458 634:416 637:458 640:405 644:542 646:440 649:405 653:590 656:428 660:410 663:495 666:523 669:571 672:463 676:447 680:416 682:428 686:458 688:433 691:447 693:495 696:480 700:458 704:548 706:458 708:405 714:627 716:405 720:416 723:535 725:422 730:447 733:463 736:433 739:475 742:470 745:400 748:560 749:440 752:447 754:410 757:463 760:555 763:487 765:463 768:487 770:567 772:500 775:422 785:428 787:416 790:453 793:512 795:410 798:416 800:440 802:548 805:433 808:487 810:416 813:495 816:518 818:410 822:463 826:529 828:512 831:453 834:416 837:428 843:512 845:571 847:555 850:428 853:453 858:447 862:416 865:542 867:428 869:560 871:512 879:523 882:458 884:400 887:422 891:453 896:571 899:614 902:487 905:567 908:480 914:583 917:440 920:487 924:542 926:416 931:523 933:410 937:433 939:410 946:583 949:518 951:428 954:523 957:410 961:500 964:405 967:463 971:410 974:433 977:535 980:560 982:500 985:470 988:453 992:416 995:422 1000:512 1003:400 1006:480 1008:453 1011:440 1015:433 1018:458 1020:627 1022:463 1025:495 1027:410 1030:463 1031:567 1034:400 1037:475 1040:453 1043:535 1045:440 1048:410 1051:512 1054:405 1058:428 1061:480 1064:535 1067:571 1069:400 1077:555 1079:518 1080:507 1082:416 1086:422 1089:470 1092:400 1096:416 1099:475 1101:410 1104:475 1107:405 1111:433 1115:548 1118:500 1120:416 1124:560 1126:422 1130:518 1132:433 1135:422 1138:555 1141:475 1145:400 1149:529 1152:567 1155:465 1160:470 1162:410 1166:512 1168:480 1171:447 1175:405 1179:410 1183:487 1187:400 1190:440 1193:416 1196:500 1198:416 1203:500 1206:480 1210:433 1215:440 1219:458 1221:614 1224:487 1227:500 1230:529 1233:577 1236:458 1240:440 1243:535 1245:480 1247:428 1251:422 1254:475 1257:428 1260:535 1263:507 1266:428 1269:405 1272:487 1275:410 1279:422 1282:560 1285:405 1289:480 1292:433 1296:500 1298:433 1303:583 1305:410 1310:447 1313:602 1316:475 1320:433 1322:422 1324:405 1330:518 1332:433 1336:560 1338:523 1340:447 1345:480 1348:555 1351:495 1353:422 1356:500 1360:405 1363:487 1367:567 1369:470 1372:410 1375:440 1379:495 1382:416 1386:400 1389:428 1392:433 1397:573 1400:410 1403:428 1410:405 1413:458 1417:529 1419:495 1422:518 1424:400 1427:416 1431:470 1434:555 1436:447 1440:440 1443:433 1445:422 1448:507 1452:480 1455:487 1457:487';
const steps=(s,fx,fy)=>s.split(' ').map(p=>{const [a,b]=p.split(':');return [Math.round(fx(+a)),Math.round(fy(+b))];});
const tv=v=>906-(v-10)*9.2;
const AREAS={
temperature:{box:[1508,579,1340,395],grid:[1593,2782,[630,722,814,906]],axis:[1581.500,[[636,'40 °C'],[728,'30 °C'],[820,'20 °C'],[912,'10 °C']]],base:906,
  pts:[...steps(TEMP_A,x=>1490+x/2.24,tv),...steps(TEMP_B,x=>2180+x/2.24,tv)],
  xl:[[1600,'12:45:59.34'],[1837,'12:36:44.69'],[2074,'13:14:05.00'],[2309.500,'13:07:04.71'],[2547,'12:56:07.70']],xy:954},
humidity:{box:[1508,1111,1340,319],grid:[1563,2782,[1256,1362]],axis:[1552,[[1262,50],[1368,0]]],base:1362,
  pts:steps(HUM,x=>1490+x/1.128,y=>1030+y/2.83),
  xl:[[1570.500,'11:41'],[1773,'12:12'],[1976,'12:28'],[2179,'12:45'],[2380.500,'13:01'],[2583.500,'13:18']],xy:1410}
};
class AreaChart extends HTMLElement{
  connectedCallback(){
    const c=AREAS[this.getAttribute('data')], p=c.pts;
    const d=`M${p[0][0]} ${c.base}`+p.map(([x,y])=>`H${x}V${y}`).join('')+`V${c.base}Z`;
    this.attachShadow({mode:'open'}).innerHTML=`${chartStyle}<svg width="${c.box[2]}" height="${c.box[3]}" viewBox="${c.box.join(' ')}">
    ${c.grid[2].map(v=>hline(c.grid[0],c.grid[1],v)).join('')}<path d="${d}" fill="#86be74" shape-rendering="crispEdges"/>
    ${c.axis[1].map(([v,t])=>label(c.axis[0],v,t,'end')).join('')}${c.xl.map(([a,t])=>label(a,c.xy,t)).join('')}</svg>`;
  }
}
customElements.define('area-chart',AreaChart);

class DashApp extends HTMLElement{
  connectedCallback(){
    this.attachShadow({mode:'open'}).innerHTML=`<style>
    :host{display:flex;width:2880px;height:1584px;box-sizing:border-box;border-top:2px solid #b7d0d8;overflow:hidden;background:#111217}
    main{flex:1;border-right:1px solid #24262b}
    .body{padding-left:32px}
    .grid{display:flex;padding-top:16px}
    .left{display:flex;flex-direction:column;gap:16px;width:1360px}
    .row{display:flex;gap:16px}
    .right{display:flex;flex-direction:column;gap:16px;width:1344px}
    chart-legend{padding-left:48px}
    .co2{padding-left:49px}
    .hl{--series:#6595ea;height:48px;border:solid #202126;border-width:2px 0;margin:0 8px 0 16px;padding-left:16px}
    </style>
    <side-nav></side-nav>
    <main><dash-header></dash-header>
      <div class="body"><geo-map></geo-map>
      <div class="grid">
        <div class="left">
          <div class="row">
            <dash-panel heading="Average Pressure (last 7 days)" style="width:664px;height:516px"><bar-chart data="pressure"></bar-chart><chart-legend>avg_pressure</chart-legend></dash-panel>
            <dash-panel heading="Average Humidity (last 7 d…" style="width:430px;height:516px"><hbar-chart></hbar-chart><chart-legend class="hl">avg_humidity<span> (right y-axis)</span></chart-legend></dash-panel>
          </div>
          <div class="row">
            <dash-panel heading="Average Temperature (last 7 days)" style="width:549px;height:516px"><bar-chart data="temp"></bar-chart><chart-legend>average_temp</chart-legend></dash-panel>
            <dash-panel heading="Average CO2 Concentration (last 7 …" style="width:542px;height:516px"><bar-chart data="co2"></bar-chart><chart-legend class="co2">average_co2_level</chart-legend></dash-panel>
          </div>
        </div>
        <div class="right">
          <dash-panel framed heading="Temperature" style="height:516px"><area-chart data="temperature"></area-chart><chart-legend>temperature</chart-legend></dash-panel>
          <dash-panel framed menu heading="Humidity" style="height:440px"><area-chart data="humidity"></area-chart><chart-legend>humidity</chart-legend></dash-panel>
        </div>
      </div></div>
    </main>`;
  }
}
customElements.define('dash-app',DashApp);
</script>
</body>
</html>
